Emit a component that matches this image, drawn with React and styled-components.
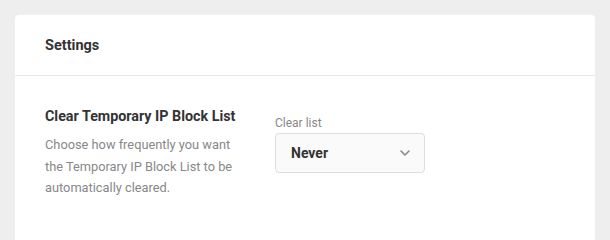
import React from 'react'
import styled, { createGlobalStyle } from 'styled-components'

const Global = createGlobalStyle`
  html, body {
    margin: 0;
    height: 100%;
    overflow: hidden;
  }
  body {
    background: #eeeeee;
    font-family: Roboto, "Liberation Sans", sans-serif;
    -webkit-font-smoothing: antialiased;
  }
`

const Page = styled.div`
  height: 100vh;
  box-sizing: border-box;
  padding: 15px 15px 0;
  display: flex;
  flex-direction: column;
`

const Card = styled.div`
  flex: 1;
  background: #fff;
  border-radius: 4px 4px 0 0;
`

const Header = styled.div`
  height: 60px;
  display: flex;
  align-items: center;
  padding: 0 30px;
  border-bottom: 1px solid #e6e6e6;
`

const Title = styled.h3`
  margin: 0;
  font-size: 14.5px;
  font-weight: 700;
  color: #333;
`

const Row = styled.div`
  display: flex;
  gap: 35px;
  padding: 29px 30px 10px;
`

const Info = styled.div`
  width: 195px;
`

const Label = styled.div`
  font-size: 14.3px;
  font-weight: 700;
  color: #333;
  line-height: 22px;
  white-space: nowrap;
`

const Desc = styled.p`
  margin: 7px 0 0;
  font-size: 12.8px;
  line-height: 21.5px;
  color: #888;
`

const Field = styled.div`
  display: flex;
  flex-direction: column;
  padding-top: 10px;
`

const FieldLabel = styled.label`
  font-size: 12px;
  color: #888;
  line-height: 16px;
  margin-bottom: 2px;
`

const Select = styled.div`
  width: 150px;
  height: 40px;
  box-sizing: border-box;
  display: flex;
  align-items: center;
  justify-content: space-between;
  padding: 0 14px 0 15px;
  background: #fafafa;
  border: 1px solid #dddddd;
  border-radius: 4px;
  font-size: 14px;
  font-weight: 700;
  color: #333;
`

const Chevron = () => (
  <svg width="10" height="6" viewBox="0 0 10 6" fill="none">
    <path d="M1 1l4 4 4-4" stroke="#888" strokeWidth="1.6" strokeLinecap="round" strokeLinejoin="round" />
  </svg>
)

export default function App() {
  return (
    <Page>
      <Global />
      <Card>
        <Header>
          <Title>Settings</Title>
        </Header>
        <Row>
          <Info>
            <Label>Clear Temporary IP Block List</Label>
            <Desc>Choose how frequently you want the Temporary IP Block List to be automatically cleared.</Desc>
          </Info>
          <Field>
            <FieldLabel>Clear list</FieldLabel>
            <Select>
              <span>Never</span>
              <Chevron />
            </Select>
          </Field>
        </Row>
      </Card>
    </Page>
  )
}
